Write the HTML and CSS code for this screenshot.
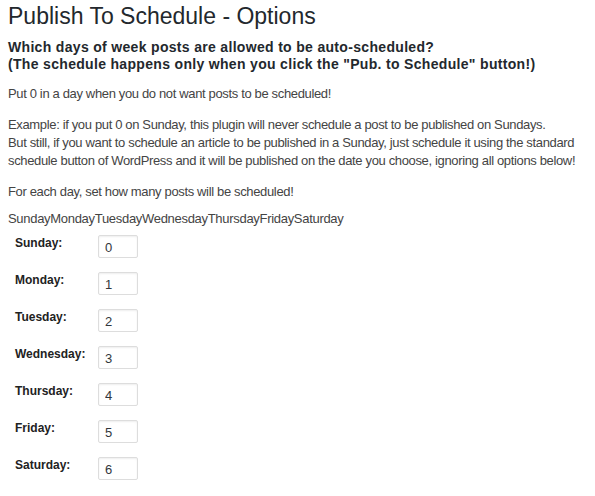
FILE: index.html
```html
<!DOCTYPE html>
<html>
<head>
<meta charset="utf-8">
<link rel="stylesheet" href="styles.css">
</head>
<body>
<div class="wrap">
  <h2 class="title">Publish To Schedule - Options</h2>
  <h3 class="question">Which days of week posts are allowed to be auto-scheduled?<br>(The schedule happens only when you click the "Pub. to Schedule" button!)</h3>
  <p class="text first">Put 0 in a day when you do not want posts to be scheduled!</p>
  <p class="text">Example: if you put 0 on Sunday, this plugin will never schedule a post to be published on Sundays.<br>But still, if you want to schedule an article to be published in a Sunday, just schedule it using the standard schedule button of WordPress and it will be published on the date you choose, ignoring all options below!</p>
  <p class="text">For each day, set how many posts will be scheduled!</p>
  <div class="daylist">SundayMondayTuesdayWednesdayThursdayFridaySaturday</div>
  <div class="days">
    <div class="row"><label class="lbl">Sunday:</label><input class="num" type="text" value="0"></div>
    <div class="row"><label class="lbl">Monday:</label><input class="num" type="text" value="1"></div>
    <div class="row"><label class="lbl">Tuesday:</label><input class="num" type="text" value="2"></div>
    <div class="row"><label class="lbl">Wednesday:</label><input class="num" type="text" value="3"></div>
    <div class="row"><label class="lbl">Thursday:</label><input class="num" type="text" value="4"></div>
    <div class="row"><label class="lbl">Friday:</label><input class="num" type="text" value="5"></div>
    <div class="row"><label class="lbl">Saturday:</label><input class="num" type="text" value="6"></div>
  </div>
</div>
</body>
</html>
```
FILE: styles.css
```css
html, body {
  margin: 0;
  padding: 0;
  background: #ffffff;
}
body {
  font-family: "Liberation Sans", Arial, sans-serif;
  color: #444444;
  font-size: 13px;
}
.wrap {
  padding: 0 8px;
}
.title {
  margin: 0;
  padding-top: 2px;
  font-size: 23px;
  font-weight: 400;
  line-height: 29px;
  color: #23282d;
}
.question {
  margin: 8px 0 0;
  font-size: 14px;
  font-weight: 700;
  line-height: 17px;
  letter-spacing: 0.32px;
  color: #23282d;
}
.text {
  margin: 13px 0 0;
  line-height: 18px;
  letter-spacing: -0.35px;
}
.text.first {
  margin-top: 12px;
}
.daylist {
  margin-top: 9px;
  line-height: 18px;
  letter-spacing: -0.3px;
}
.days {
  margin-top: 7px;
  display: flex;
  flex-direction: column;
  gap: 14px;
}
.row {
  display: grid;
  grid-template-columns: 83px 40px;
  align-items: start;
  padding-left: 7px;
}
.lbl {
  font-size: 12px;
  font-weight: 700;
  color: #222222;
  line-height: 16px;
}
.num {
  box-sizing: border-box;
  width: 40px;
  height: 23px;
  margin: 0;
  padding: 2px 6px 0;
  border: 1px solid #dddddd;
  border-radius: 2px;
  box-shadow: inset 0 1px 2px rgba(0,0,0,0.07);
  font-family: "Liberation Sans", Arial, sans-serif;
  font-size: 13px;
  color: #32373c;
  background: #ffffff;
}
```
